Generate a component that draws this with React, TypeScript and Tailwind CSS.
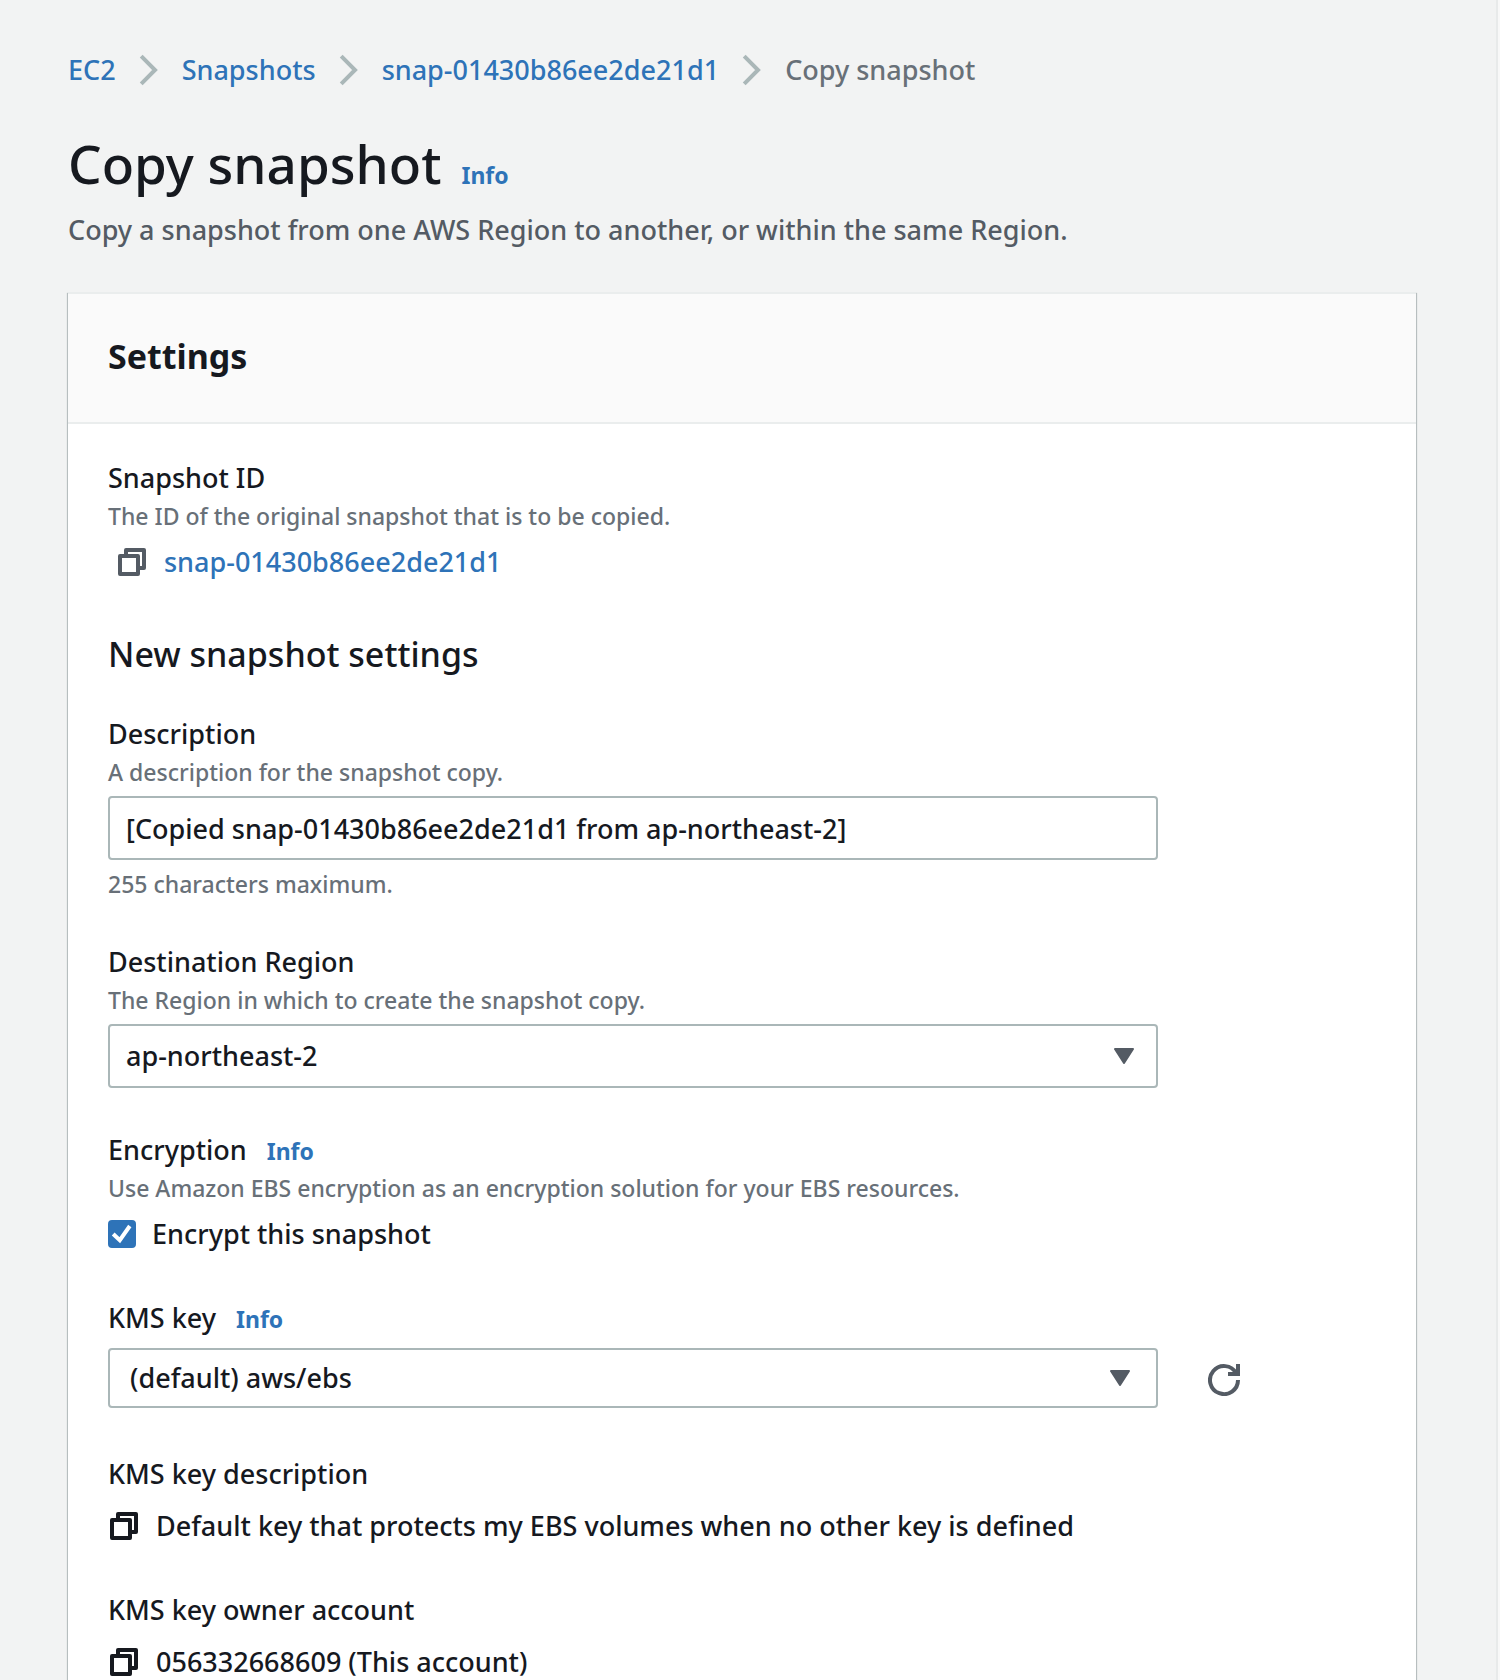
import React from "react";

const breadcrumbs = [
  { label: "EC2", href: "#ec2" },
  { label: "Snapshots", href: "#snapshots" },
  { label: "snap-01430b86ee2de21d1", href: "#snapshot" },
];

function ChevronIcon() {
  return (
    <svg width="20" height="32" viewBox="0 0 20 32" fill="none" aria-hidden="true" className="shrink-0">
      <path d="M2.2 2.2L16 16L2.2 29.8" stroke="#aab7b8" strokeWidth="4" />
    </svg>
  );
}

function CopyIcon() {
  return (
    <svg
      width="28"
      height="28"
      viewBox="0 0 28 28"
      fill="none"
      stroke="currentColor"
      strokeWidth="4"
      strokeLinejoin="round"
      aria-hidden="true"
    >
      <path d="M2 8h18v18H2z" />
      <path d="M8 7V2h18v18h-5" />
    </svg>
  );
}

function RefreshIcon() {
  return (
    <svg width="32" height="32" viewBox="0 0 32 32" fill="none" stroke="currentColor" strokeWidth="4" aria-hidden="true">
      <path d="M30 16A14 14 0 1 1 28.2 9.2" />
      <path d="M30 0v10H20" />
    </svg>
  );
}

function CaretIcon() {
  return (
    <svg width="20" height="16" viewBox="0 0 20 16" aria-hidden="true">
      <path d="M1 1h18l-9 14z" fill="#545b64" stroke="#545b64" strokeWidth="2" strokeLinejoin="round" />
    </svg>
  );
}

function InfoLink() {
  return (
    <a href="#info" className="text-[23px] leading-8 font-bold text-[#2e73b8]">
      Info
    </a>
  );
}

interface FieldProps {
  label: string;
  htmlFor?: string;
  hint?: string;
  info?: boolean;
  children: React.ReactNode;
}

function Field({ label, htmlFor, hint, info, children }: FieldProps) {
  return (
    <div className="flex flex-col">
      <div className="flex items-baseline gap-5 leading-11">
        {htmlFor ? <label htmlFor={htmlFor}>{label}</label> : <span>{label}</span>}
        {info && <InfoLink />}
      </div>
      {hint && <p className="text-[23px] leading-8 text-[#687078]">{hint}</p>}
      <div className="mt-2">{children}</div>
    </div>
  );
}

function CopyableValue({ children }: { children: React.ReactNode }) {
  return (
    <div className="flex items-center gap-[18px] pl-[2px] leading-11">
      <button type="button" aria-label="Copy">
        <CopyIcon />
      </button>
      <span>{children}</span>
    </div>
  );
}

export default function App() {
  return (
    <div className="min-h-screen bg-[#f8f8f8] pr-[2px] font-['Noto_Sans','Open_Sans',sans-serif] text-[27px] font-medium text-[#16191f]">
      <main className="flex min-h-screen flex-col border-r-2 border-[#e8eaea] bg-[#f2f3f3] pt-12 pr-20 pl-[68px]">
        <nav aria-label="Breadcrumb" className="flex items-center gap-[23px] leading-11">
          {breadcrumbs.map((crumb) => (
            <React.Fragment key={crumb.label}>
              <a href={crumb.href} className="text-[#2e73b8]">
                {crumb.label}
              </a>
              <ChevronIcon />
            </React.Fragment>
          ))}
          <span className="text-[#687078]">Copy snapshot</span>
        </nav>

        <header>
          <div className="mt-9 flex items-baseline gap-5">
            <h1 className="text-[53px] leading-18 font-medium">Copy snapshot</h1>
            <InfoLink />
          </div>
          <p className="mt-2 leading-11 text-[#545b64]">
            Copy a snapshot from one AWS Region to another, or within the same Region.
          </p>
        </header>

        <section className="mt-10 flex-1 border-t-2 border-[#eaeded] bg-white shadow-[0_1px_1px_0_rgba(0,28,36,0.3),1px_1px_1px_0_rgba(0,28,36,0.2),-1px_1px_1px_0_rgba(0,28,36,0.2)]">
          <div className="border-b-2 border-[#eaeded] bg-[#fafafa] px-10 pt-10 pb-11">
            <h2 className="text-[34px] leading-11 font-bold">Settings</h2>
          </div>

          <form className="px-10 pt-8">
            <Field label="Snapshot ID" hint="The ID of the original snapshot that is to be copied.">
              <div className="flex items-center gap-[18px] pl-[10px] leading-11">
                <button type="button" aria-label="Copy snapshot ID" className="text-[#545b64]">
                  <CopyIcon />
                </button>
                <a href="#snapshot" className="text-[#2e73b8]">
                  snap-01430b86ee2de21d1
                </a>
              </div>
            </Field>

            <h3 className="mt-12 mb-9 text-[34px] leading-11 font-medium">New snapshot settings</h3>

            <div className="flex flex-col gap-10">
              <Field label="Description" htmlFor="description" hint="A description for the snapshot copy.">
                <input
                  id="description"
                  type="text"
                  maxLength={255}
                  defaultValue="[Copied snap-01430b86ee2de21d1 from ap-northeast-2]"
                  className="h-16 w-full max-w-[1050px] rounded-[4px] border-2 border-[#aab7b8] bg-white px-4"
                />
                <p className="mt-2 text-[23px] leading-8 text-[#687078]">255 characters maximum.</p>
              </Field>

              <Field label="Destination Region" htmlFor="region" hint="The Region in which to create the snapshot copy.">
                <div className="relative max-w-[1050px]">
                  <select
                    id="region"
                    defaultValue="ap-northeast-2"
                    className="h-16 w-full appearance-none rounded-[4px] border-2 border-[#aab7b8] bg-white px-4"
                  >
                    <option>ap-northeast-2</option>
                  </select>
                  <span className="pointer-events-none absolute inset-y-0 right-6 flex items-center">
                    <CaretIcon />
                  </span>
                </div>
              </Field>

              <Field label="Encryption" info hint="Use Amazon EBS encryption as an encryption solution for your EBS resources.">
                <label className="flex items-center gap-4 leading-11">
                  <span className="grid place-items-center">
                    <input
                      type="checkbox"
                      defaultChecked
                      className="peer col-start-1 row-start-1 size-7 appearance-none rounded-[4px] border-2 border-[#687078] bg-white checked:border-[#2e73b8] checked:bg-[#2e73b8]"
                    />
                    <svg
                      viewBox="0 0 28 28"
                      fill="none"
                      aria-hidden="true"
                      className="pointer-events-none invisible col-start-1 row-start-1 size-7 peer-checked:visible"
                    >
                      <path d="M5.2 14L11.8 20.2L21.8 6" stroke="#fff" strokeWidth="4" />
                    </svg>
                  </span>
                  Encrypt this snapshot
                </label>
              </Field>

              <Field label="KMS key" htmlFor="kms-key" info>
                <div className="flex items-start gap-[50px]">
                  <div className="relative w-full max-w-[1050px]">
                    <select
                      id="kms-key"
                      defaultValue="(default) aws/ebs"
                      className="block h-15 w-full appearance-none rounded-[4px] border-2 border-[#aab7b8] bg-white px-5"
                    >
                      <option>(default) aws/ebs</option>
                    </select>
                    <span className="pointer-events-none absolute inset-y-0 right-7 flex items-center">
                      <CaretIcon />
                    </span>
                  </div>
                  <button type="button" aria-label="Refresh KMS keys" className="py-4 text-[#545b64]">
                    <RefreshIcon />
                  </button>
                </div>
              </Field>

              <Field label="KMS key description">
                <CopyableValue>Default key that protects my EBS volumes when no other key is defined</CopyableValue>
              </Field>

              <Field label="KMS key owner account">
                <CopyableValue>056332668609 (This account)</CopyableValue>
              </Field>
            </div>
          </form>
        </section>
      </main>
    </div>
  );
}
